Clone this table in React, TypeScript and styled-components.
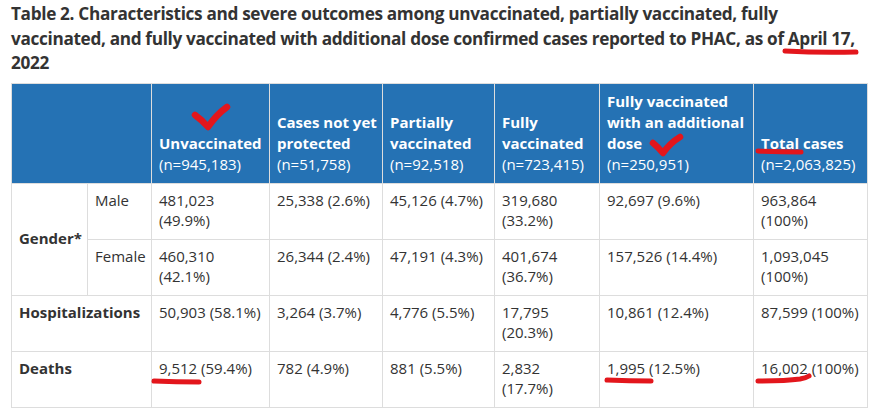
import React from 'react';
import styled, { createGlobalStyle } from 'styled-components';

const GlobalStyle = createGlobalStyle`
  html, body {
    margin: 0;
    background: #fff;
    color: #333;
    font-family: "Open Sans", "Noto Sans", sans-serif;
  }
`;

const Page = styled.div`
  position: relative;
  width: 875px;
  height: 417px;
  box-sizing: border-box;
  padding: 2px 8px 0 11px;
  overflow: hidden;
`;

const Caption = styled.h2`
  margin: 0 0 7px;
  font-size: 17.2px;
  letter-spacing: -0.33px;
  line-height: 24.5px;
  font-weight: 700;
  white-space: pre;
`;

const Table = styled.table`
  width: 856px;
  border-collapse: collapse;
  table-layout: fixed;
  font-size: 15px;
`;

const HeadCell = styled.th`
  background: #2572b4;
  color: #fff;
  border: 1px solid #ddd;
  padding: 7px 7px 8px;
  line-height: 21px;
  text-align: left;
  vertical-align: bottom;
  font-weight: 700;
  white-space: pre;
`;

const Count = styled.span`
  display: block;
  font-weight: 400;
`;

const RowHead = styled.th<{ $middle?: boolean }>`
  border: 1px solid #ddd;
  padding: 6px 7px 9px;
  line-height: 20px;
  text-align: left;
  font-weight: 700;
  vertical-align: ${(p) => (p.$middle ? 'middle' : 'top')};
`;

const Cell = styled.td`
  border: 1px solid #ddd;
  padding: 6px 7px 9px;
  line-height: 20px;
  vertical-align: top;
  white-space: pre;
`;

const Marks = styled.svg`
  position: absolute;
  top: 0;
  left: 0;
  pointer-events: none;
`;

const Ink = styled.path`
  fill: none;
  stroke: #e3161c;
  stroke-linecap: round;
  stroke-linejoin: round;
`;

const widths = [76, 64, 118, 113, 112, 105, 154, 114];

const columns = [
  { label: 'Unvaccinated', n: '(n=945,183)' },
  { label: 'Cases not yet\nprotected', n: '(n=51,758)' },
  { label: 'Partially\nvaccinated', n: '(n=92,518)' },
  { label: 'Fully\nvaccinated', n: '(n=723,415)' },
  { label: 'Fully vaccinated\nwith an additional\ndose', n: '(n=250,951)' },
  { label: 'Total cases', n: '(n=2,063,825)' },
];

const male = ['481,023\n(49.9%)', '25,338 (2.6%)', '45,126 (4.7%)', '319,680\n(33.2%)', '92,697 (9.6%)', '963,864\n(100%)'];
const female = ['460,310\n(42.1%)', '26,344 (2.4%)', '47,191 (4.3%)', '401,674\n(36.7%)', '157,526 (14.4%)', '1,093,045\n(100%)'];
const hosp = ['50,903 (58.1%)', '3,264 (3.7%)', '4,776 (5.5%)', '17,795\n(20.3%)', '10,861 (12.4%)', '87,599 (100%)'];
const deaths = ['9,512 (59.4%)', '782 (4.9%)', '881 (5.5%)', '2,832\n(17.7%)', '1,995 (12.5%)', '16,002 (100%)'];

const Values = ({ values }: { values: string[] }) => (
  <>
    {values.map((v, i) => (
      <Cell key={i}>{v}</Cell>
    ))}
  </>
);

export default function App() {
  return (
    <Page>
      <GlobalStyle />
      <Caption>
        {'Table 2. Characteristics and severe outcomes among unvaccinated, partially vaccinated, fully\nvaccinated, and fully vaccinated with additional dose confirmed cases reported to PHAC, as of April 17,\n2022'}
      </Caption>
      <Table>
        <colgroup>
          {widths.map((w, i) => (
            <col key={i} style={{ width: w }} />
          ))}
        </colgroup>
        <thead>
          <tr>
            <HeadCell colSpan={2} />
            {columns.map((c) => (
              <HeadCell key={c.n}>
                {c.label}
                <Count>{c.n}</Count>
              </HeadCell>
            ))}
          </tr>
        </thead>
        <tbody>
          <tr>
            <RowHead rowSpan={2} $middle>
              Gender*
            </RowHead>
            <Cell>Male</Cell>
            <Values values={male} />
          </tr>
          <tr>
            <Cell>Female</Cell>
            <Values values={female} />
          </tr>
          <tr>
            <RowHead colSpan={2}>Hospitalizations</RowHead>
            <Values values={hosp} />
          </tr>
          <tr>
            <RowHead colSpan={2}>Deaths</RowHead>
            <Values values={deaths} />
          </tr>
        </tbody>
      </Table>

      {/* hand-drawn red annotations over the screenshot */}
      <Marks width={875} height={417} viewBox="0 0 875 417">
        <Ink d="M195 115 Q202 120 208 127 Q216 115 227 107" strokeWidth={6.5} />
        <Ink d="M653 143 Q658 147 663 153 Q670 143 680 137" strokeWidth={6.5} />
        <Ink d="M785 51 Q820 53 856 52" strokeWidth={5} />
        <Ink d="M758 151 Q780 152 801 152" strokeWidth={5} />
        <Ink d="M154 381 Q176 382 199 382" strokeWidth={5} />
        <Ink d="M607 380 Q630 381 651 381" strokeWidth={5} />
        <Ink d="M758 381 Q785 381 800 379 Q806 378 809 376" strokeWidth={5} />
      </Marks>
    </Page>
  );
}
